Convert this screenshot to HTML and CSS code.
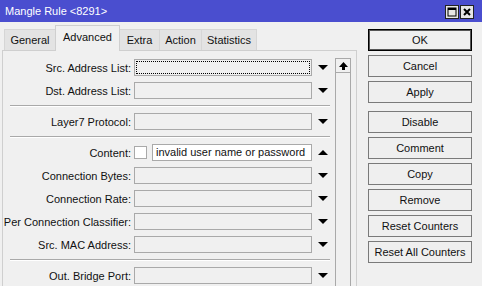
FILE: index.html
```html
<!DOCTYPE html>
<html lang="en">
<head>
   <meta charset="UTF-8">
   <title>Mangle Rule &lt;8291&gt;</title>
   <link rel="stylesheet" href="styles.css">
</head>
<body>
   <div class="window">
      <div class="titlebar flex align-center">
         <span class="title">Mangle Rule &lt;8291&gt;</span>
         <div class="tbtns flex">
            <div class="tbtn centre">
               <svg width="10" height="10" viewBox="0 0 10 10"><rect x="1" y="1" width="8" height="8" fill="none" stroke="#000" stroke-width="1"/><rect x="1" y="1" width="8" height="2" fill="#000"/></svg>
            </div>
            <div class="tbtn centre">
               <svg width="10" height="10" viewBox="0 0 10 10"><path d="M2 2 L8 8 M8 2 L2 8" stroke="#000" stroke-width="2"/></svg>
            </div>
         </div>
      </div>

      <div class="main flex">
         <div class="left">
            <div class="tabs flex align-end">
               <div class="tab t-general">General</div>
               <div class="tab t-advanced active">Advanced</div>
               <div class="tab t-extra">Extra</div>
               <div class="tab t-action">Action</div>
               <div class="tab t-stats">Statistics</div>
            </div>
            <div class="panel flex">
               <div class="form">
                  <div class="row flex align-center">
                     <label>Src. Address List:</label>
                     <div class="field focus"></div>
                     <span class="arrow down"></span>
                  </div>
                  <div class="row flex align-center">
                     <label>Dst. Address List:</label>
                     <div class="field"></div>
                     <span class="arrow down"></span>
                  </div>
                  <div class="sep"></div>
                  <div class="row flex align-center">
                     <label>Layer7 Protocol:</label>
                     <div class="field"></div>
                     <span class="arrow down"></span>
                  </div>
                  <div class="sep"></div>
                  <div class="row flex align-center">
                     <label>Content:</label>
                     <div class="checkbox"></div>
                     <div class="field short text">invalid user name or password</div>
                     <span class="arrow up"></span>
                  </div>
                  <div class="row flex align-center">
                     <label>Connection Bytes:</label>
                     <div class="field"></div>
                     <span class="arrow down"></span>
                  </div>
                  <div class="row flex align-center">
                     <label>Connection Rate:</label>
                     <div class="field"></div>
                     <span class="arrow down"></span>
                  </div>
                  <div class="row flex align-center">
                     <label>Per Connection Classifier:</label>
                     <div class="field"></div>
                     <span class="arrow down"></span>
                  </div>
                  <div class="row flex align-center">
                     <label>Src. MAC Address:</label>
                     <div class="field"></div>
                     <span class="arrow down"></span>
                  </div>
                  <div class="sep"></div>
                  <div class="row flex align-center">
                     <label>Out. Bridge Port:</label>
                     <div class="field"></div>
                     <span class="arrow down"></span>
                  </div>
               </div>
               <div class="scroll flex column">
                  <div class="scroll-btn centre">
                     <svg width="9" height="8" viewBox="0 0 9 8"><path d="M4.5 0 L9 5 L6 5 L6 8 L3 8 L3 5 L0 5 Z" fill="#000"/></svg>
                  </div>
                  <div class="track"></div>
               </div>
            </div>
         </div>

         <div class="actions flex column">
            <div class="btn default">OK</div>
            <div class="btn">Cancel</div>
            <div class="btn">Apply</div>
            <div class="btn group">Disable</div>
            <div class="btn">Comment</div>
            <div class="btn">Copy</div>
            <div class="btn">Remove</div>
            <div class="btn">Reset Counters</div>
            <div class="btn">Reset All Counters</div>
         </div>
      </div>
   </div>
</body>
</html>
```

FILE: styles.css
```css
/** Commun */
* { padding: 0;
    margin: 0;
    box-sizing: border-box;
    font-family: "Liberation Sans", Arial, sans-serif;
}
body {
   font-size: 11px;
   color: #111;
   background-color: #f0f0f0;
   overflow: hidden;
}

/** Flex */
.flex { display: flex;}
.column { flex-direction: column;}
.align-center { align-items: center;}
.align-end { align-items: flex-end;}
.centre {
   display: flex;
   align-items: center;
   justify-content: center;
}

.window {
   width: 482px;
   height: 286px;
   overflow: hidden;
}

/** Barre de titre */
.titlebar {
   height: 22px;
   background-color: #4a4ecf;
   padding-left: 5px;
   justify-content: space-between;
}
.title {
   color: white;
   font-size: 11px;
}
.tbtns {
   gap: 1px;
   margin-right: 8px;
   margin-top: 1px;
}
.tbtn {
   width: 14px;
   height: 14px;
   border: 1px solid #222;
   background-color: #e6e6e6;
}

/** Onglets */
.main {
   padding-left: 2px;
}
.left {
   width: 355px;
}
.tabs {
   height: 28px;
   padding-left: 2px;
}
.tab {
   height: 21px;
   line-height: 20px;
   text-align: center;
   background-color: #e3e3e3;
   border: 1px solid #d6d6d6;
   border-bottom: none;
   margin-right: -1px;
}
.tab.active {
   height: 26px;
   line-height: 22px;
   background-color: #f0f0f0;
   border-color: #cfcfcf;
   margin-bottom: -1px;
   position: relative;
   z-index: 1;
}
.t-general { width: 52px;}
.t-advanced { width: 65px;}
.t-extra { width: 41px;}
.t-action { width: 43px;}
.t-stats { width: 56px;}

/** Panneau */
.panel {
   height: 240px;
   border: 1px solid #cfcfcf;
   border-bottom: none;
   background-color: #f0f0f0;
   padding-right: 5px;
}
.form {
   width: 332px;
   padding-top: 8px;
}
.row {
   height: 17px;
   margin-bottom: 6px;
}
label {
   width: 128px;
   text-align: right;
   margin-right: 3px;
   white-space: nowrap;
}
.field {
   width: 178px;
   height: 17px;
   border: 1px solid #a9a9a9;
   background-color: #f0f0f0;
   position: relative;
}
.field.focus::after {
   content: "";
   position: absolute;
   left: 1px;
   top: 1px;
   right: 1px;
   bottom: 1px;
   border: 1px dotted #000;
}
.field.short {
   width: 160px;
}
.field.text {
   background-color: white;
   padding-left: 3px;
   line-height: 15px;
   white-space: nowrap;
}
.checkbox {
   width: 13px;
   height: 13px;
   border: 1px solid #a9a9a9;
   background-color: white;
   margin-right: 5px;
}
.arrow {
   width: 0;
   height: 0;
   margin-left: 6px;
   border-left: 5px solid transparent;
   border-right: 5px solid transparent;
}
.arrow.down {
   border-top: 5px solid #000;
}
.arrow.up {
   border-bottom: 5px solid #000;
}
.sep {
   margin: 0 5px 6px 7px;
   border-top: 1px solid #a9a9a9;
   border-bottom: 1px solid #fff;
}

/** Ascenseur */
.scroll {
   width: 16px;
   padding-top: 7px;
}
.scroll-btn {
   height: 15px;
   border: 1px solid #a9a9a9;
   background-color: #f0f0f0;
}
.track {
   flex: 1;
   border-left: 1px solid #a9a9a9;
   border-right: 1px solid #a9a9a9;
}

/** Boutons */
.actions {
   width: 104px;
   margin-left: 11px;
   padding-top: 7px;
   gap: 4px;
}
.btn {
   height: 22px;
   line-height: 20px;
   text-align: center;
   border: 1px solid #7a7a7a;
   background-color: #efefef;
   white-space: nowrap;
}
.btn.default {
   border: 1px solid #000;
   box-shadow: inset 0 0 0 1px #555;
}
.btn.group {
   margin-top: 4px;
}
```
